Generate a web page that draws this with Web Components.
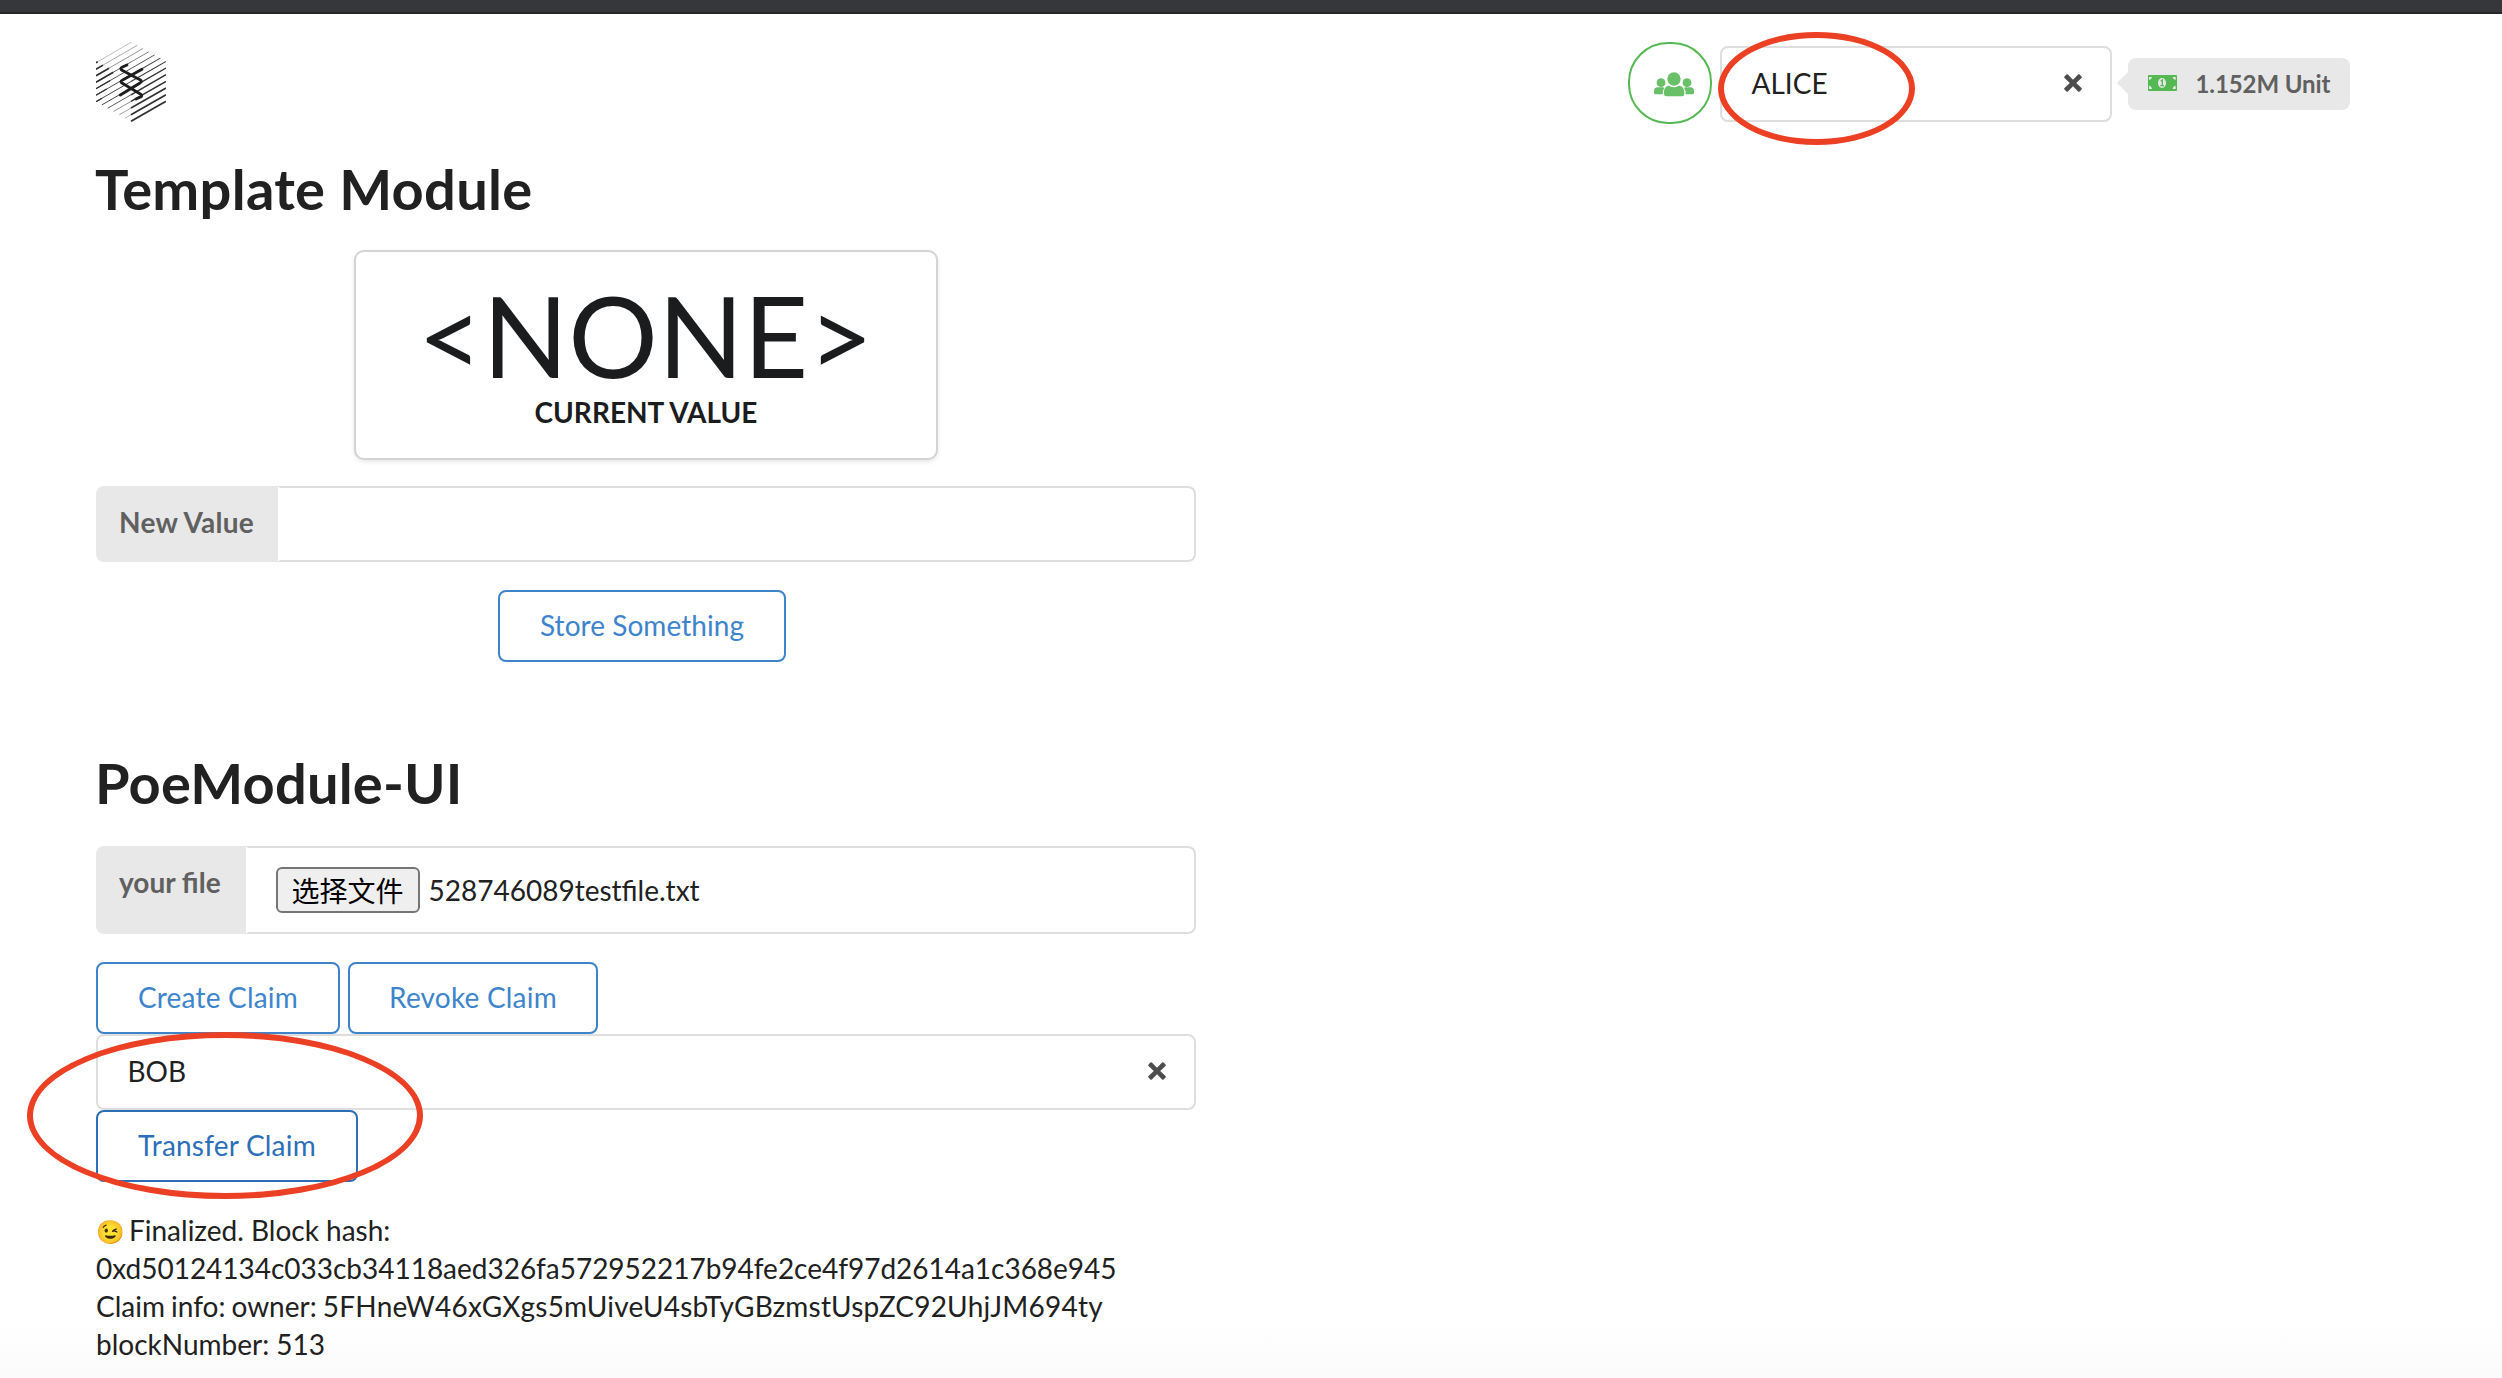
<!DOCTYPE html>
<html lang="en">
<head>
<meta charset="utf-8">
<title>Substrate Front End</title>
<style>
html,body{margin:0;padding:0}
body{width:2502px;height:1378px;overflow:hidden;background:#fff;font-family:Lato,"Noto Sans CJK SC",sans-serif;font-size:28px;color:#212121}
</style>
</head>
<body>
<poe-app></poe-app>
<script>
const define = (name, markup) => customElements.define(name, class extends HTMLElement {
  constructor() {
    super();
    this.attachShadow({ mode: 'open' }).innerHTML = '<style>*{box-sizing:border-box}</style>' + markup;
  }
});

customElements.define('hex-logo', class extends HTMLElement {
  constructor() {
    super();
    let lines = '';
    for (let k = 0; k <= 12; k++) {
      const l = k <= 6 ? [108, 188 + 19.5 * k] : [108 + 17.5 * (k - 6), 305 + 9.8 * (k - 6)];
      const r = k <= 6 ? [215 + 17.2 * k, 126 + 9.7 * k] : [318, 184 + 20 * (k - 6)];
      const at = x => l[1] + (r[1] - l[1]) * (x - l[0]) / (r[0] - l[0]);
      const seg = (a, b, w, c) => `<path d="M${a} ${at(a)}L${b} ${at(b)}" stroke="${c}" stroke-width="${w}"/>`;
      const tone = ['#aaa', '#8a8a8a', '#6c6c6c', '#555', '#484848', '#404040', '#3a3a3a'][Math.min(k, 6)];
      const leftTone = k < 8 ? tone : ['#505050', '#666', '#808080', '#9a9a9a', '#333'][k - 8];
      lines += seg(l[0], Math.max(l[0], 213), k === 12 ? 5 : 2.2 + (k > 2 && k < 9 ? .6 : 0), leftTone);
      lines += seg(213, r[0], k < 4 ? 2.2 : Math.min(5.4, 2.4 + (k - 3) * .34), k > 6 ? '#303030' : tone);
      if (k < 7) lines += seg(108, [113, 129, 147, 160, 150, 140, 126][k], k < 4 ? 5 : 4, '#303030');
    }
    this.attachShadow({ mode: 'open' }).innerHTML = `<style>:host{display:block;width:70px;height:80px}svg{display:block;width:100%;height:100%}</style>
<svg viewBox="108 126 210 240" fill="none">${lines}
<g stroke="#1d1d1d" stroke-width="8.5" stroke-linecap="round" stroke-linejoin="round">
<path d="M201 195L186 202Q179 206 186 211L240 239Q248 244 240 249L181 285"/>
<path d="M246 208L188 240Q178 245 187 250L241 282Q249 287 242 291L228 297"/></g></svg>`;
  }
});

define('icon-times', `<style>:host{display:block;width:18px;height:18px}svg{display:block}</style>
<svg width="18" height="18" viewBox="0 0 18 18"><path fill="#4d4d4d" d="M12.2 9L17.5 3.9Q18.2 3.2 17.5 2.4L15.6.5Q14.9-.2 14.1.5L9 5.7 3.9.5Q3.1-.2 2.4.5L.5 2.4Q-.2 3.2.5 3.9L5.8 9 .5 14.1Q-.2 14.8.5 15.6L2.4 17.5Q3.1 18.2 3.9 17.5L9 12.3 14.1 17.5Q14.9 18.2 15.6 17.5L17.5 15.6Q18.2 14.8 17.5 14.1Z"/></svg>`);

define('icon-users', `<style>:host{display:block}svg{display:block}</style>
<svg width="40" height="25" viewBox="0 0 120 75" fill="#6abf69">
<circle cx="60" cy="21" r="20"/><circle cx="21" cy="32" r="13.2"/><circle cx="99" cy="32" r="13.2"/>
<path d="M30 60C30 49 36 41 46 41Q60 50 74 41C84 41 91 49 91 60V66Q91 73 84 73H37Q30 73 30 66Z"/>
<path d="M0 58Q0 46 11 46H27Q29 46 31 48 26 54 26 67H5Q0 67 0 62Z"/>
<path d="M120 58Q120 46 109 46H94Q92 46 90 48 95 54 95 67H115Q120 67 120 62Z"/></svg>`);

define('icon-money', `<style>:host{display:block}svg{display:block}</style>
<svg width="29" height="16" viewBox="0 0 87 48"><rect width="87" height="48" rx="2" fill="#54b853"/>
<g fill="#e8e8e8"><path d="M3 6H12Q11 14 3 15ZM83 6H74Q75 14 83 15ZM3 42H12Q11 33 3 32ZM83 42H74Q75 33 83 32Z"/><ellipse cx="42" cy="24" rx="12" ry="15"/></g>
<path d="M38 18L43 15V31M37 32H48" fill="none" stroke="#54b853" stroke-width="4"/></svg>`);

define('account-select', `<style>:host{display:block;height:76px}
.box{height:76px;border:2px solid #dedede;border-radius:8px;background:#fff;display:flex;align-items:center;justify-content:space-between;padding:0 28px 2px 29.5px;line-height:34px}</style>
<div class="box"><span><slot></slot></span><icon-times></icon-times></div>`);

define('balance-label', `<style>:host{display:block}
.label{position:relative;width:222px;height:52px;border-radius:8px;background:#e8e8e8;display:flex;align-items:center;gap:18.5px;padding:0 0 2px 20px;font-size:24px;font-weight:700;letter-spacing:-.1px;color:#606060;white-space:nowrap}
.label::before{content:"";position:absolute;left:-11px;top:14px;border:solid transparent;border-width:11.5px 11px 11.5px 0;border-right-color:#e8e8e8}</style>
<div class="label"><icon-money></icon-money><span><slot></slot></span></div>`);

define('account-bar', `<style>:host{display:flex;justify-content:space-between;padding:28px 152px 0 96px;height:110px}
.right{display:flex}
.circle{width:84px;height:82px;border:2px solid #54b853;border-radius:40px;padding:28px 0 0 24px;margin-right:8px}
account-select{width:392px;margin:4px 16px 0 0}
balance-label{margin-top:16px}</style>
<hex-logo></hex-logo>
<div class="right"><div class="circle"><icon-users></icon-users></div><account-select>ALICE</account-select><balance-label>1.152M Unit</balance-label></div>`);

define('ui-heading', `<style>:host{display:block}h1{margin:0 0 0 -1px;font-size:56px;line-height:72px;font-weight:700;letter-spacing:var(--track,.3px)}</style><h1><slot></slot></h1>`);

define('value-card', `<style>:host{display:flex;flex-direction:column;align-items:center;width:580px;height:206px;border-radius:8px;background:#fff;box-shadow:0 2px 6px 0 #d4d4d5,0 0 0 2px #d4d4d5;color:#1b1c1d}
.value{font-size:112px;line-height:112px;margin:27px 1px 0 0}
.name{font-weight:700;line-height:40px;margin-top:1px}</style>
<div class="value"><slot></slot></div><div class="name"><slot name="name"></slot></div>`);

define('labeled-input', `<style>:host{display:flex;height:76px}
.label{background:#e8e8e8;color:#606060;font-weight:700;letter-spacing:var(--track,normal);padding:20px 0 0 23px;line-height:32px;border-radius:8px 0 0 8px;white-space:nowrap;width:var(--label)}
.field{flex:1;border:2px solid #dedede;border-left-color:transparent;border-radius:0 8px 8px 0;display:flex;align-items:center;padding-left:28px}</style>
<div class="label"><slot name="label"></slot></div><div class="field"><slot></slot></div>`);

define('file-picker', `<style>:host{display:flex;align-items:center;gap:8.5px}
.btn{font-family:"Noto Sans CJK SC",sans-serif;width:144px;height:46px;border:2px solid #767676;border-radius:6px;background:#efefef;color:#000;display:flex;align-items:center;justify-content:center;line-height:40px;padding-right:1px;white-space:nowrap}</style>
<span class="btn">选择文件</span><span><slot></slot></span>`);

define('basic-button', `<style>:host{display:inline-flex;height:72px;--c:#3d84cb;letter-spacing:.2px}
:host([focused]){--c:#2c6fb8}
button{all:unset;box-sizing:border-box;width:100%;border:2px solid var(--c);border-radius:8px;background:#fff;color:var(--c);line-height:28px;padding:0 0 2px 0;text-align:center;white-space:nowrap}</style>
<button><slot></slot></button>`);

define('red-mark', `<style>:host{position:absolute;display:block;border:6px solid #ec4025;border-radius:50%;box-sizing:border-box}</style>`);

define('poe-app', `<style>
:host{display:block;position:relative;width:2502px;height:1378px;background:linear-gradient(#fff 1320px,#fbfbfb)}
.chrome{height:14px;background:#36373b;border-bottom:2px solid #272729}
main{width:1100px;margin-left:96px;display:flex;flex-direction:column}
.row{display:flex;gap:8px}
.log{line-height:38px;margin-top:29px;white-space:nowrap}
.log p{margin:0;height:38px}
.hash{letter-spacing:-.02px}
.key{letter-spacing:.21px}
.owner{word-spacing:-1.1px}
.emoji{display:inline-block;width:33px;font-size:23px;line-height:30px;position:relative;top:-1px}
</style>
<div class="chrome"></div>
<account-bar></account-bar>
<main>
<ui-heading style="margin-top:29px">Template Module</ui-heading>
<value-card style="margin:27px 0 0 260px">&lt;NONE&gt;<span slot="name">CURRENT VALUE</span></value-card>
<labeled-input style="margin-top:28px;--label:182px;--track:.25px"><span slot="label">New Value</span></labeled-input>
<basic-button style="margin:28px 0 0 402px;width:288px;letter-spacing:.05px">Store Something</basic-button>
<ui-heading style="margin-top:85px;--track:.2px">PoeModule-UI</ui-heading>
<labeled-input style="margin-top:27px;height:88px;--label:150px"><span slot="label">your file</span><file-picker>528746089testfile.txt</file-picker></labeled-input>
<div class="row" style="margin-top:28px"><basic-button style="width:244px">Create Claim</basic-button><basic-button style="width:250px">Revoke Claim</basic-button></div>
<account-select>BOB</account-select>
<basic-button focused style="width:262px">Transfer Claim</basic-button>
<div class="log"><p><span class="emoji">😉</span>Finalized. Block hash:</p><p class="hash">0xd50124134c033cb34118aed326fa572952217b94fe2ce4f97d2614a1c368e945</p><p class="owner">Claim info: owner: <span class="key">5FHneW46xGXgs5mUiveU4sbTyGBzmstUspZC92UhjJM694ty</span></p><p>blockNumber: 513</p></div>
</main>
<red-mark style="left:1718px;top:32px;width:197px;height:113px"></red-mark>
<red-mark style="left:27px;top:1032px;width:396px;height:167px"></red-mark>`);
</script>
</body>
</html>
